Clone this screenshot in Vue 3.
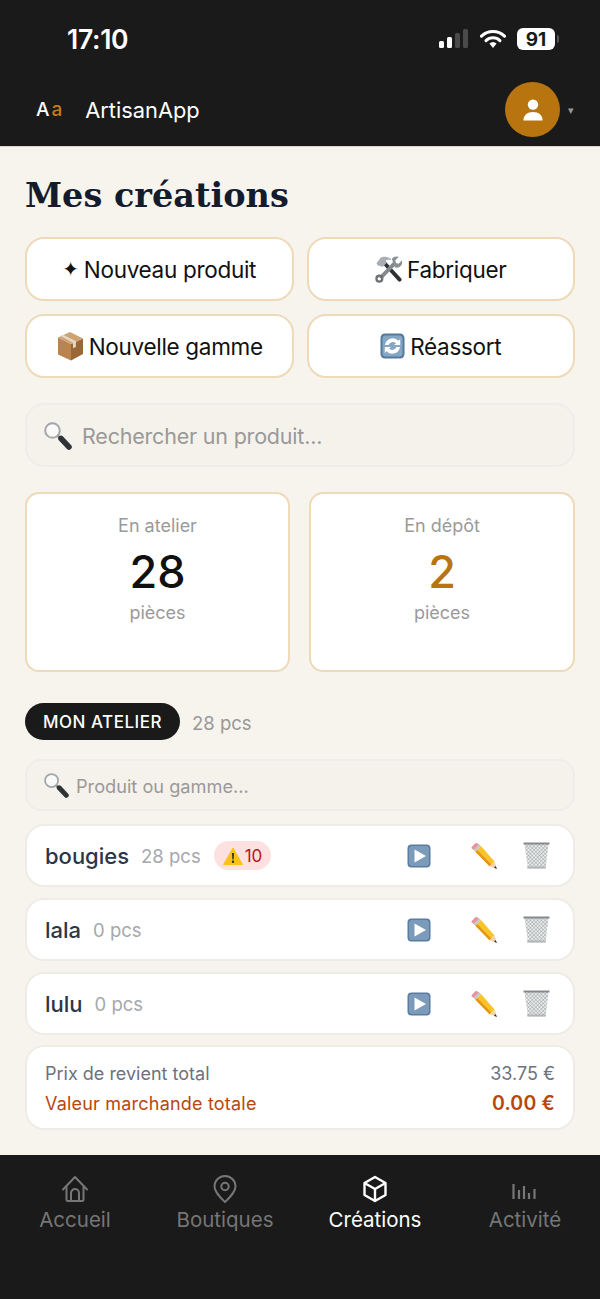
<template>
  <div class="app">
    <header class="top">
      <div class="status">
        <span class="time">17:10</span>
        <div class="status-icons">
          <svg class="signal" width="30" height="20" viewBox="0 0 30 20">
            <rect x="0" y="12" width="5" height="7" rx="1.5" fill="#fff" />
            <rect x="8" y="8" width="5" height="11" rx="1.5" fill="#fff" />
            <rect x="16" y="4" width="5" height="15" rx="1.5" fill="#4a4a4a" />
            <rect x="24" y="0" width="5" height="19" rx="1.5" fill="#4a4a4a" />
          </svg>
          <svg class="wifi" width="26" height="20" viewBox="0 0 26 20">
            <path d="M1.5 7.2a16.5 16.5 0 0 1 23 0" fill="none" stroke="#fff" stroke-width="3" stroke-linecap="round" />
            <path d="M6 11.6a10 10 0 0 1 14 0" fill="none" stroke="#fff" stroke-width="3" stroke-linecap="round" />
            <path d="M9.4 14.6 13 19l3.6-4.4a5.4 5.4 0 0 0-7.2 0z" fill="#fff" />
          </svg>
          <div class="battery">
            <span class="battery-level">91</span>
            <i class="battery-tip"></i>
          </div>
        </div>
      </div>
      <div class="brand-row">
        <div class="brand">
          <span class="logo">A<b>a</b></span>
          <span class="brand-name">ArtisanApp</span>
        </div>
        <div class="user">
          <div class="avatar">
            <svg width="24" height="24" viewBox="0 0 24 24" fill="#fff">
              <circle cx="12" cy="6.6" r="5.2" />
              <path d="M2.4 22.5c0-5.6 4-8.6 9.6-8.6s9.6 3 9.6 8.6z" />
            </svg>
          </div>
          <span class="caret">▾</span>
        </div>
      </div>
    </header>

    <main class="content">
      <h1 class="title">Mes créations</h1>

      <div class="actions">
        <button v-for="a in actions" :key="a.label" class="action">
          <span v-if="a.icon === 'spark'" class="spark">✦</span>
          <svg v-else-if="a.icon === 'tools'" width="27" height="28" viewBox="0 0 28 28">
            <path d="M8 6 25.500 25" fill="none" stroke="#2f3235" stroke-width="4" stroke-linecap="round" />
            <path d="M1.500 8 5.500 2.500C8 .8 12 .6 17 3.500l-1 1.200c-2-.4-4-.2-5 1l.6 2.500-4 3.800L5 10.500 3.500 11z" fill="#a9afb4" />
            <path d="M5.500 23.500 20 8.500" fill="none" stroke="#85898d" stroke-width="4" />
            <circle cx="4.500" cy="24" r="3" fill="none" stroke="#6d7175" stroke-width="2.400" />
            <path d="M17.500 3.500c1.500-2 4.500-3 7-2l-3.500 3.500.8 2.700 2.700.8L28 5c.8 3-.5 5.500-2.500 6.800-1.500 1-3.500 1-5 .5z" fill="#8b9095" />
          </svg>
          <svg v-else-if="a.icon === 'box'" width="28" height="30" viewBox="0 0 28 30">
            <path d="M15 13v16.500L27 23V7.500z" fill="#9a6836" />
            <path d="M15 13v16.500L2 23.500V6.500z" fill="#b98450" />
            <path d="M14 1 27 7.500 15 13 2 6.500z" fill="#cfa274" />
            <path d="m7 3.700 13 6.500-.2 5.800-2.800 1.200v-5.500L4.500 5z" fill="#e4d8c6" />
          </svg>
          <svg v-else width="25" height="26" viewBox="0 0 25 26">
            <rect x="0.500" y="0.500" width="24" height="25" rx="4.500" fill="#55799c" />
            <rect x="2.500" y="2.500" width="20" height="21" rx="3" fill="#86a6c5" />
            <path d="M5 12a7.800 7.800 0 0 1 13.400-4.300l1.800-1.600v6H14l2-1.900A4.800 4.800 0 0 0 8.500 12z" fill="#fff" />
            <path d="M20 14a7.800 7.800 0 0 1-13.400 4.300l-1.800 1.600v-6H11l-2 1.900A4.800 4.800 0 0 0 16.500 14z" fill="#fff" />
          </svg>
          <span>{{ a.label }}</span>
        </button>
      </div>

      <div class="search search-main">
        <svg class="loupe" width="28" height="28" viewBox="0 0 28 28">
          <path d="m13 13 4 4" stroke="#7d8388" stroke-width="2.500" />
          <path d="M17 16.500 25 25" stroke="#2f3236" stroke-width="5.500" stroke-linecap="round" />
          <circle cx="8.500" cy="8.500" r="7.300" fill="#f9f9f8" stroke="#a1a7ab" stroke-width="2" />
        </svg>
        <span>Rechercher un produit...</span>
      </div>

      <div class="stats">
        <div class="stat">
          <span class="stat-label">En atelier</span>
          <strong class="stat-value">28</strong>
          <span class="stat-unit">pièces</span>
        </div>
        <div class="stat">
          <span class="stat-label">En dépôt</span>
          <strong class="stat-value amber">2</strong>
          <span class="stat-unit">pièces</span>
        </div>
      </div>

      <div class="section-head">
        <span class="pill">MON ATELIER</span>
        <span class="section-count">28 pcs</span>
      </div>

      <div class="search search-small">
        <svg class="loupe" width="25" height="25" viewBox="0 0 28 28">
          <path d="m13 13 4 4" stroke="#7d8388" stroke-width="2.500" />
          <path d="M17 16.500 25 25" stroke="#2f3236" stroke-width="5.500" stroke-linecap="round" />
          <circle cx="8.500" cy="8.500" r="7.300" fill="#f9f9f8" stroke="#a1a7ab" stroke-width="2" />
        </svg>
        <span>Produit ou gamme...</span>
      </div>

      <div class="rows">
        <div v-for="p in products" :key="p.name" class="row">
          <span class="row-name">{{ p.name }}</span>
          <span class="row-count">{{ p.count }} pcs</span>
          <span v-if="p.alert" class="alert">
            <svg width="20" height="18" viewBox="0 0 20 18">
              <path d="M10 1 19.500 17.500H.5z" fill="#fcc21b" stroke="#fcc21b" stroke-linejoin="round" />
              <path d="M9 6h2l-.4 6.500H9.400z" fill="#2b2b2b" />
              <circle cx="10" cy="14.700" r="1.200" fill="#2b2b2b" />
            </svg>
            {{ p.alert }}
          </span>
          <div class="row-tools">
            <svg class="tool-play" width="24" height="24" viewBox="0 0 24 24">
              <rect x="0.500" y="0.500" width="23" height="23" rx="4" fill="#5a7c9e" />
              <rect x="2" y="2" width="20" height="20" rx="3" fill="#7c9bba" />
              <path d="M7.500 5.500v13L19 12z" fill="#fff" />
            </svg>
            <svg class="tool-edit" width="28" height="28" viewBox="0 0 28 28">
              <path d="m1.800 5 3-3.300c1-.9 2.300-.9 3.200 0l2 1.800-5.300 5.300-2.800-2.300c-.6-.5-.6-1-.100-1.500z" fill="#e8939a" />
              <path d="m3.500 7.700 5.400-5.400 2.100 1.700-5.600 5.700z" fill="#c4c8cc" />
              <path d="M5.400 9.700 11 4l13.500 15.500-5 4.700z" fill="#f8c42a" />
              <path d="M5.400 9.700 7.200 7.900 21.300 22.500l-1.800 1.700z" fill="#e4951a" />
              <path d="m24.500 19.500 2.500 7.500-7.500-2.800z" fill="#f0d2a8" />
              <path d="m25.500 24 1.500 3-3-1.300z" fill="#333" />
            </svg>
            <svg class="tool-trash" width="27" height="27" viewBox="0 0 27 27">
              <defs>
                <pattern id="mesh" width="2.600" height="2.600" patternUnits="userSpaceOnUse" patternTransform="rotate(45)">
                  <rect width="2.600" height="2.600" fill="#eceeee" />
                  <path d="M0 0h2.600M0 0v2.600" stroke="#8a8f92" stroke-width="0.800" />
                </pattern>
              </defs>
              <path d="M1.500 2h24L22.800 25c-.2 1-1 1.500-2 1.500h-14c-1 0-1.800-.5-2-1.500z" fill="url(#mesh)" />
              <path d="M.5 .5h26v2H.5z" fill="#85898c" />
              <path d="M4 24.500h19l-.3 2H4.300z" fill="#b3b6b8" />
            </svg>
          </div>
        </div>
      </div>

      <div class="totals">
        <div class="total-line">
          <span>Prix de revient total</span>
          <span>33.75 €</span>
        </div>
        <div class="total-line total-sale">
          <span>Valeur marchande totale</span>
          <strong>0.00 €</strong>
        </div>
      </div>
    </main>

    <nav class="nav">
      <div class="nav-item">
        <svg width="28" height="28" viewBox="0 0 28 28" fill="none" stroke="currentColor" stroke-width="2" stroke-linejoin="round" stroke-linecap="round">
          <path d="M2 14.500 14 2l12 12.500" />
          <path d="M5.500 12v12.500c0 1 .6 1.500 1.500 1.500h14c.9 0 1.500-.5 1.500-1.500V12" />
          <path d="M10 26v-8c0-2.200 1.800-4 4-4s4 1.800 4 4v8" />
        </svg>
        <span>Accueil</span>
      </div>
      <div class="nav-item">
        <svg width="28" height="28" viewBox="0 0 28 28" fill="none" stroke="currentColor" stroke-width="2">
          <path d="M14 27C9 22 3.500 17 3.500 11.500a10.500 10.500 0 0 1 21 0C24.500 17 19 22 14 27z" stroke-linejoin="round" />
          <circle cx="14" cy="11.500" r="3.700" />
        </svg>
        <span>Boutiques</span>
      </div>
      <div class="nav-item active">
        <svg width="28" height="28" viewBox="0 0 28 28" fill="none" stroke="currentColor" stroke-width="2.400" stroke-linejoin="round">
          <path d="M14 2 24.500 8v12L14 26 3.500 20V8z" />
          <path d="M3.500 8 14 14l10.500-6M14 14v12" />
        </svg>
        <span>Créations</span>
      </div>
      <div class="nav-item">
        <svg width="28" height="28" viewBox="0 0 28 28" fill="none" stroke="currentColor" stroke-width="2.200">
          <path d="M2.500 9v15M8 15v9M13 11v13M18 18v6M23.500 14v10" />
        </svg>
        <span>Activité</span>
      </div>
    </nav>
  </div>
</template>

<script setup>
const actions = [
  { label: 'Nouveau produit', icon: 'spark' },
  { label: 'Fabriquer', icon: 'tools' },
  { label: 'Nouvelle gamme', icon: 'box' },
  { label: 'Réassort', icon: 'sync' },
]

const products = [
  { name: 'bougies', count: 28, alert: 10 },
  { name: 'lala', count: 0 },
  { name: 'lulu', count: 0 },
]
</script>

<style>
html,
body {
  margin: 0;
  background: #f7f4ee;
}
</style>

<style scoped>
.app {
  width: 600px;
  height: 1299px;
  display: flex;
  flex-direction: column;
  background: #f7f4ee;
  font-family: Inter, "Noto Sans", sans-serif;
  overflow: hidden;
}

.top {
  height: 146px;
  background: #1a1a1a;
  border-bottom: 1px solid #e0d6c8;
  color: #fff;
  flex-shrink: 0;
}

.status {
  height: 72px;
  padding: 6px 45px 0 67px;
  box-sizing: border-box;
  display: flex;
  align-items: center;
  justify-content: space-between;
}

.time {
  font-size: 26.500px;
  font-weight: 600;
  letter-spacing: -0.3px;
}

.status-icons {
  display: flex;
  align-items: center;
}

.signal {
  margin-right: 11px;
}

.wifi {
  margin-right: 11px;
}

.battery {
  position: relative;
  width: 38px;
  height: 22px;
  background: #fff;
  border-radius: 6px;
  display: flex;
  align-items: center;
  justify-content: center;
}

.battery-level {
  color: #1a1a1a;
  font-size: 19px;
  font-weight: 700;
}

.battery-tip {
  position: absolute;
  right: -4px;
  top: 7px;
  width: 2px;
  height: 8px;
  background: #555;
  border-radius: 0 2px 2px 0;
}

.brand-row {
  height: 74px;
  padding: 1px 26px 0 36px;
  box-sizing: border-box;
  display: flex;
  align-items: center;
  justify-content: space-between;
}

.brand {
  display: flex;
  align-items: center;
  gap: 21px;
}

.logo {
  font-size: 19px;
  font-weight: 500;
  letter-spacing: 2px;
}

.logo b {
  color: #c27c14;
  font-weight: 500;
}

.brand-name {
  font-size: 21.800px;
}

.user {
  display: flex;
  align-items: center;
  gap: 8px;
}

.avatar {
  width: 55px;
  height: 55px;
  border-radius: 50%;
  background: #b8750f;
  display: flex;
  align-items: center;
  justify-content: center;
}

.caret {
  color: #9a9a9a;
  font-size: 11px;
}

.content {
  flex: 1;
  padding: 24px 25px 0;
  min-height: 0;
}

.title {
  margin: 0;
  height: 50px;
  line-height: 50px;
  font-family: "DejaVu Serif", "Liberation Serif", serif;
  font-size: 33.500px;
  font-weight: 700;
  letter-spacing: 0;
  color: #141b2d;
}

.actions {
  margin-top: 16px;
  display: grid;
  grid-template-columns: 1fr 1fr;
  gap: 13px;
}

.action {
  height: 64px;
  padding: 0;
  background: #fff;
  border: 2px solid #eed9b8;
  border-radius: 19px;
  color: #111;
  font: 400 22.500px Inter, "Noto Sans", sans-serif;
  letter-spacing: -0.3px;
  display: flex;
  align-items: center;
  justify-content: center;
  gap: 5px;
}

.spark {
  font-family: "DejaVu Sans", sans-serif;
  font-size: 20px;
}

.search {
  display: flex;
  align-items: center;
  background: #f5f2ec;
  border: 2px solid #efede8;
  box-sizing: border-box;
  color: #999;
}

.search-main {
  margin-top: 25px;
  height: 64px;
  border-radius: 19px;
  padding: 1px 0 0 17px;
  gap: 10px;
  font-size: 21.500px;
  letter-spacing: -0.2px;
}

.stats {
  margin-top: 25px;
  display: grid;
  grid-template-columns: 265px 266px;
  justify-content: space-between;
}

.stat {
  height: 180px;
  box-sizing: border-box;
  padding-top: 20px;
  background: #fff;
  border: 2px solid #eed9b8;
  border-radius: 14px;
  display: flex;
  flex-direction: column;
  align-items: center;
}

.stat-label,
.stat-unit {
  color: #9a9a9a;
  font-size: 18px;
  line-height: 24px;
}

.stat-value {
  margin-top: 4px;
  font-size: 45px;
  font-weight: 500;
  line-height: 59px;
  color: #111;
}

.amber {
  color: #b8750f;
}

.section-head {
  margin-top: 31px;
  display: flex;
  align-items: center;
  gap: 12px;
}

.pill {
  width: 155px;
  height: 37px;
  border-radius: 19px;
  background: #1a1a1a;
  color: #fff;
  font-size: 17px;
  font-weight: 500;
  letter-spacing: 0.5px;
  display: flex;
  align-items: center;
  justify-content: center;
}

.section-count {
  padding-top: 2px;
  color: #999;
  font-size: 18.500px;
}

.search-small {
  margin-top: 19px;
  height: 52px;
  border-radius: 16px;
  padding: 1px 0 0 17px;
  gap: 7px;
  font-size: 18.200px;
}

.rows {
  margin-top: 13px;
  display: flex;
  flex-direction: column;
  gap: 11px;
}

.row {
  height: 63px;
  box-sizing: border-box;
  padding-left: 18px;
  background: #fff;
  border: 2px solid #eeece7;
  border-radius: 19px;
  display: flex;
  align-items: center;
}

.row-name {
  color: #2d3648;
  font-size: 22px;
  font-weight: 500;
}

.row-count {
  margin-left: 12px;
  color: #a5a8ad;
  font-size: 18.500px;
}

.alert {
  margin-left: 13px;
  height: 29px;
  padding: 0 9px;
  border-radius: 15px;
  background: #fde0e0;
  color: #c0101c;
  font-size: 17px;
  display: flex;
  align-items: center;
  gap: 2px;
}

.row-tools {
  margin-left: auto;
  width: 168px;
  height: 100%;
  display: flex;
  align-items: center;
  flex-shrink: 0;
}

.tool-play {
  margin-left: 2px;
}

.tool-edit {
  margin-left: 39px;
}

.tool-trash {
  margin-left: 25px;
}

.totals {
  margin-top: 10px;
  height: 85px;
  box-sizing: border-box;
  padding: 2px 18px 0;
  background: #fff;
  border: 2px solid #eeece7;
  border-radius: 19px;
  display: flex;
  flex-direction: column;
  justify-content: center;
  gap: 9px;
}

.total-line {
  display: flex;
  justify-content: space-between;
  color: #6b7280;
  font-size: 18px;
  line-height: 21px;
}

.total-sale {
  color: #b8470d;
  letter-spacing: 0.2px;
}

.total-sale strong {
  font-weight: 600;
  font-size: 19.500px;
}

.nav {
  height: 144px;
  flex-shrink: 0;
  background: #1a1a1a;
  display: grid;
  grid-template-columns: repeat(4, 150px);
  color: #767676;
}

.nav-item {
  padding-top: 20px;
  display: flex;
  flex-direction: column;
  align-items: center;
  font-size: 20.500px;
  gap: 4px;
}

.nav-item.active {
  color: #fff;
}
</style>
